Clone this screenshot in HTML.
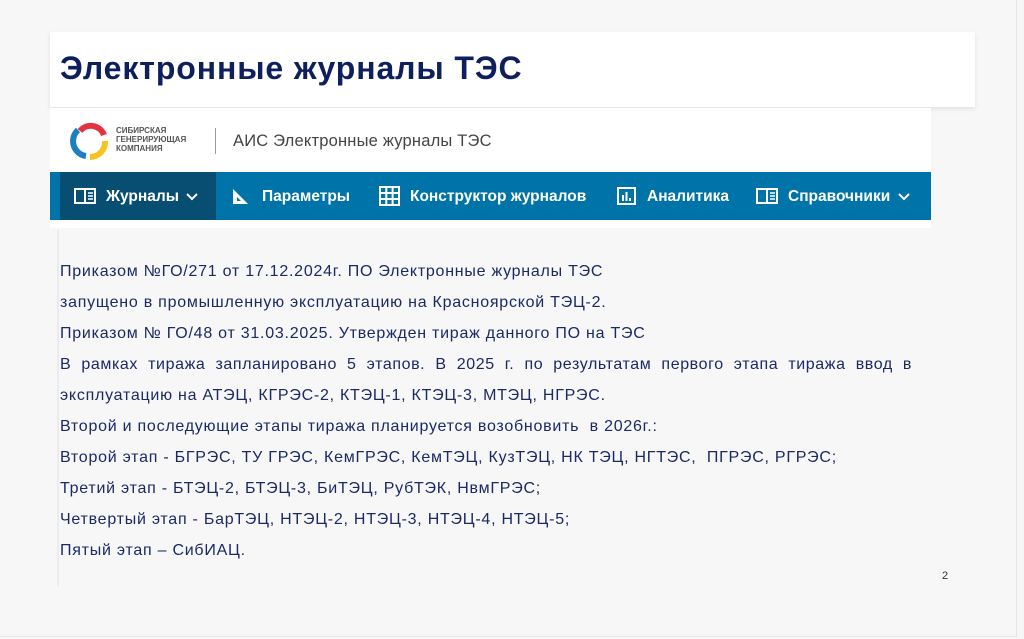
<!DOCTYPE html>
<html><head><meta charset="utf-8"><style>
*{margin:0;padding:0;box-sizing:border-box}
body{width:1024px;height:639px;background:#f7f7f8;position:relative;overflow:hidden;font-family:"Liberation Sans",sans-serif}
.abs{position:absolute;white-space:nowrap}
#frame{position:absolute;left:0;top:0;width:1017px;height:637px;border-right:1px solid #e4e4e6;border-bottom:1px solid #e4e4e6}
#title{position:absolute;left:50px;top:32px;width:925px;height:75px;background:#fff;box-shadow:0 2px 4px rgba(200,180,185,.35)}
#title span{position:absolute;left:10px;top:18px;font-size:32px;font-weight:bold;color:#0d1f5c;letter-spacing:0.9px}
#app{position:absolute;left:50px;top:108px;width:881px;height:120px;background:#fff}
#nav{position:absolute;left:50px;top:172px;width:881px;height:48px;background:#0073a8}
#act{position:absolute;left:60px;top:172px;width:156px;height:48px;background:#074e72}
.n{position:absolute;top:188px;color:#fff;font-size:15.5px;font-weight:bold;white-space:nowrap}
.txt{position:absolute;left:60px;color:#1b2a63;font-size:16px;letter-spacing:0.75px;white-space:nowrap}
</style></head><body>
<div id="frame"></div>
<div style="position:absolute;left:57px;top:230px;width:2px;height:356px;background:#ececef"></div>
<div id="title"><span>Электронные журналы ТЭС</span></div>
<div id="app"></div>
<svg class="abs" style="left:70px;top:121px" width="40" height="40" viewBox="0 0 40 40">
<path d="M10 10 A14 14 0 0 1 34 14" stroke="#e5323f" stroke-width="6" fill="none"/>
<path d="M35 20 A15 15 0 0 1 20 36" stroke="#f5c422" stroke-width="6" fill="none"/>
<path d="M16 35 A15 15 0 0 1 8 9" stroke="#1d7fc1" stroke-width="6" fill="none"/>
</svg>
<div class="abs" style="left:116px;top:126px;font-size:8px;font-weight:bold;color:#555;line-height:9px">СИБИРСКАЯ<br>ГЕНЕРИРУЮЩАЯ<br>КОМПАНИЯ</div>
<div style="position:absolute;left:215px;top:128px;width:1px;height:26px;background:#999"></div>
<div class="abs" style="left:233px;top:132px;font-size:16.5px;color:#444;letter-spacing:0.2px">АИС Электронные журналы ТЭС</div>
<div id="nav"></div>
<div id="act"></div>
<svg class="abs" style="left:74px;top:188px" width="22" height="16"><rect x="1" y="1" width="20" height="14" fill="none" stroke="#fff" stroke-width="2"/><line x1="11" y1="1" x2="11" y2="15" stroke="#fff" stroke-width="2"/><path d="M14 5h5M14 8h5M14 11h5" stroke="#fff" stroke-width="1.5"/></svg>
<div class="n" style="left:106px">Журналы</div>
<svg class="abs" style="left:186px;top:193px" width="12" height="8"><path d="M1 1l5 5 5-5" stroke="#fff" stroke-width="2" fill="none"/></svg>
<svg class="abs" style="left:232px;top:188px" width="17" height="17"><path d="M1 1v15h15z" fill="#fff"/><path d="M5 9v4h4z" fill="#0073a8"/></svg>
<div class="n" style="left:262px">Параметры</div>
<svg class="abs" style="left:379px;top:186px" width="21" height="20"><rect x="1" y="1" width="19" height="18" fill="none" stroke="#fff" stroke-width="2"/><path d="M7.3 1v18M13.6 1v18M1 7h19M1 13h19" stroke="#fff" stroke-width="2"/></svg>
<div class="n" style="left:410px">Конструктор журналов</div>
<svg class="abs" style="left:617px;top:187px" width="19" height="18"><rect x="1" y="1" width="17" height="16" fill="none" stroke="#fff" stroke-width="2"/><path d="M6 8v6M9.5 5v9M13 11v3" stroke="#fff" stroke-width="2"/></svg>
<div class="n" style="left:647px">Аналитика</div>
<svg class="abs" style="left:756px;top:188px" width="22" height="16"><rect x="1" y="1" width="20" height="14" fill="none" stroke="#fff" stroke-width="2"/><line x1="11" y1="1" x2="11" y2="15" stroke="#fff" stroke-width="2"/><path d="M14 5h5M14 8h5M14 11h5" stroke="#fff" stroke-width="1.5"/></svg>
<div class="n" style="left:788px">Справочники</div>
<svg class="abs" style="left:898px;top:193px" width="12" height="8"><path d="M1 1l5 5 5-5" stroke="#fff" stroke-width="2" fill="none"/></svg>

<div class="txt" style="top:263px">Приказом №ГО/271 от 17.12.2024г. ПО Электронные журналы ТЭС</div>
<div class="txt" style="top:294px">запущено в промышленную эксплуатацию на Красноярской ТЭЦ-2.</div>
<div class="txt" style="top:325px">Приказом № ГО/48 от 31.03.2025. Утвержден тираж данного ПО на ТЭС</div>
<div class="txt" style="top:356px;width:852px;text-align:justify;text-align-last:justify;letter-spacing:0.6px">В рамках тиража запланировано 5 этапов. В 2025 г. по результатам первого этапа тиража ввод в</div>
<div class="txt" style="top:387px">эксплуатацию на АТЭЦ, КГРЭС-2, КТЭЦ-1, КТЭЦ-3, МТЭЦ, НГРЭС.</div>
<div class="txt" style="top:418px">Второй и последующие этапы тиража планируется возобновить&nbsp; в 2026г.:</div>
<div class="txt" style="top:449px">Второй этап - БГРЭС, ТУ ГРЭС, КемГРЭС, КемТЭЦ, КузТЭЦ, НК ТЭЦ, НГТЭС,&nbsp; ПГРЭС, РГРЭС;</div>
<div class="txt" style="top:480px">Третий этап - БТЭЦ-2, БТЭЦ-3, БиТЭЦ, РубТЭК, НвмГРЭС;</div>
<div class="txt" style="top:511px">Четвертый этап - БарТЭЦ, НТЭЦ-2, НТЭЦ-3, НТЭЦ-4, НТЭЦ-5;</div>
<div class="txt" style="top:542px">Пятый этап – СибИАЦ.</div>
<div class="abs" style="left:942px;top:570px;font-size:11px;color:#333">2</div>
</body></html>
